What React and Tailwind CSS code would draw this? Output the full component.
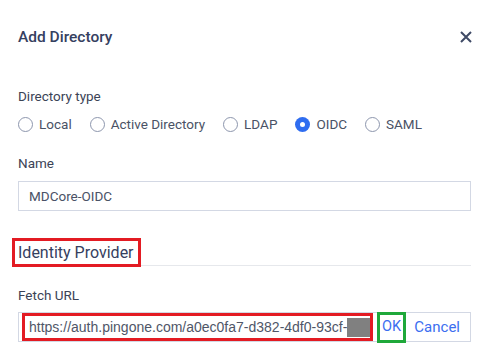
import { useState } from "react"

const types = ["Local", "Active Directory", "LDAP", "OIDC", "SAML"]

function Radio({ label, checked, onClick }) {
  return (
    <label onClick={onClick} className="flex items-center gap-[6px] cursor-pointer">
      {checked ? (
        <span className="w-[15px] h-[15px] rounded-full bg-[#2f6df0] flex items-center justify-center">
          <span className="w-[5px] h-[5px] rounded-full bg-white" />
        </span>
      ) : (
        <span className="w-[15px] h-[15px] rounded-full border border-[#8d96ad] bg-white" />
      )}
      <span>{label}</span>
    </label>
  )
}

export default function App() {
  const [dirType, setDirType] = useState("OIDC")

  return (
    <div className="w-[489px] h-[360px] bg-white text-[#3b4356] font-['Roboto','Noto_Sans',sans-serif]">
      {/* Header */}
      <div className="flex items-center justify-between pl-[18px] pr-[17px] pt-[27px]">
        <h2 className="text-[15.5px] font-medium text-[#354060] leading-5">Add Directory</h2>
        <button className="text-[#3f4a66]">
          <svg width="12" height="12" viewBox="0 0 12 12" fill="none" stroke="currentColor" strokeWidth="2">
            <path d="M1 1L11 11M11 1L1 11" />
          </svg>
        </button>
      </div>

      <div className="px-[18px] pt-[41px]">
        {/* Directory type */}
        <div className="text-[13.5px] leading-4">Directory type</div>
        <div className="flex items-center gap-[18px] mt-[12px] text-[13.5px] leading-4 text-[#4a5266]">
          {types.map((t) => (
            <Radio key={t} label={t} checked={dirType === t} onClick={() => setDirType(t)} />
          ))}
        </div>

        {/* Name */}
        <div className="mt-[23px] text-[13.5px] leading-4">Name</div>
        <div className="mt-[10px] h-[30px] border border-[#d3d8e4] flex items-center px-[10px] text-[13.5px] text-[#4a5266]">
          MDCore-OIDC
        </div>

        {/* Identity Provider */}
        <div className="flex items-end mt-[27px]">
          <div className="border-[3px] border-[#e31b23] pl-[3px] pr-[4px] -ml-[6px] h-[29px] flex items-center">
            <span className="text-[16px] text-[#354060]">Identity Provider</span>
          </div>
          <div className="flex-1 border-b border-[#e6e8ec] mb-[1px]" />
        </div>

        {/* Fetch URL */}
        <div className="mt-[20px] text-[13.5px] leading-4">Fetch URL</div>
        <div className="mt-[9px] h-[30px] border border-[#d3d8e4] flex items-center pl-[3px] pr-[10px]">
          <div className="h-[28px] w-[351px] border-[3px] border-[#e31b23] flex items-center pl-[4px] overflow-hidden whitespace-nowrap font-['Liberation_Sans',Arial,sans-serif] text-[14px] text-[#4f5668]">
            https://auth.pingone.com/a0ec0fa7-d382-4df0-93cf-
            <span className="inline-block w-[27px] h-[19px] bg-[#808080]" />
          </div>
          <button className="ml-[4px] h-[31px] w-[29px] border-[3px] border-[#1fa83a] text-[#3b6ef0] text-[14.5px] flex items-center justify-center">
            OK
          </button>
          <button className="ml-auto text-[#3b6ef0] text-[15px]">Cancel</button>
        </div>
      </div>
    </div>
  )
}
